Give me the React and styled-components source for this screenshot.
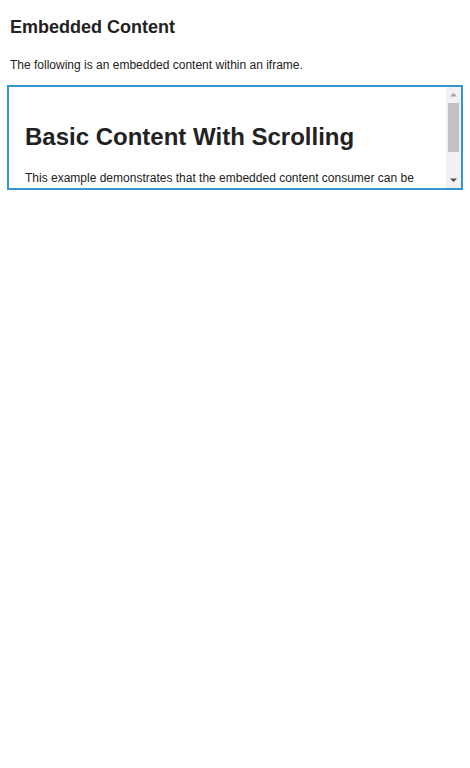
import React from "react";
import styled, { createGlobalStyle } from "styled-components";

const Global = createGlobalStyle`
  html, body { margin: 0; padding: 0; background: #fff; }
  body { font-family: "Liberation Sans", Arial, sans-serif; color: #222; }
`;

const Page = styled.div`
  padding: 0 7px;
`;

const Title = styled.h2`
  margin: 0;
  padding: 17px 3px 0;
  font-size: 18px;
  font-weight: bold;
  color: #222;
  line-height: 21px;
`;

const Intro = styled.p`
  margin: 0;
  padding: 20px 3px 0;
  font-size: 12px;
  line-height: 14px;
  color: #222;
`;

const Frame = styled.div`
  margin-top: 13px;
  border: 2px solid #3595d0;
  height: 101px;
  display: flex;
  box-sizing: content-box;
`;

const Viewport = styled.div`
  flex: 1;
  min-width: 0;
  overflow-y: auto;
  scrollbar-width: none;
  &::-webkit-scrollbar {
    display: none;
  }
`;

const FrameBody = styled.div`
  padding: 36px 16px 15px;
`;

const FrameTitle = styled.h1`
  margin: 0;
  font-size: 24px;
  line-height: 28px;
  font-weight: bold;
  color: #222;
`;

const FrameText = styled.p`
  margin: 19px 0 0;
  font-size: 12px;
  line-height: 16px;
  color: #222;
`;

const Scrollbar = styled.div`
  width: 15px;
  flex: none;
  background: #f1f1f1;
  display: flex;
  flex-direction: column;
`;

const Arrow = styled.div`
  height: 15px;
  flex: none;
  display: flex;
  align-items: center;
  justify-content: center;
`;

const Track = styled.div`
  flex: 1;
  padding: 1px 2px 0;
`;

const Thumb = styled.div`
  height: 49px;
  background: #c1c1c1;
`;

const ArrowIcon = ({ down, color }) => (
  <svg width="15" height="15" viewBox="0 0 15 15">
    <polygon
      points={down ? "4,5.5 11,5.5 7.5,9" : "4,9.5 11,9.5 7.5,6"}
      fill={color}
    />
  </svg>
);

export default function App() {
  return (
    <>
      <Global />
      <Page>
        <Title>Embedded Content</Title>
        <Intro>The following is an embedded content within an iframe.</Intro>
        <Frame>
          <Viewport>
            <FrameBody>
              <FrameTitle>Basic Content With Scrolling</FrameTitle>
              <FrameText>
                This example demonstrates that the embedded content consumer can be
                scrolled to view the rest of the content within the frame, even
                when the content is taller than the frame itself.
              </FrameText>
            </FrameBody>
          </Viewport>
          <Scrollbar>
            <Arrow>
              <ArrowIcon color="#a3a3a3" />
            </Arrow>
            <Track>
              <Thumb />
            </Track>
            <Arrow>
              <ArrowIcon down color="#505050" />
            </Arrow>
          </Scrollbar>
        </Frame>
      </Page>
    </>
  );
}
